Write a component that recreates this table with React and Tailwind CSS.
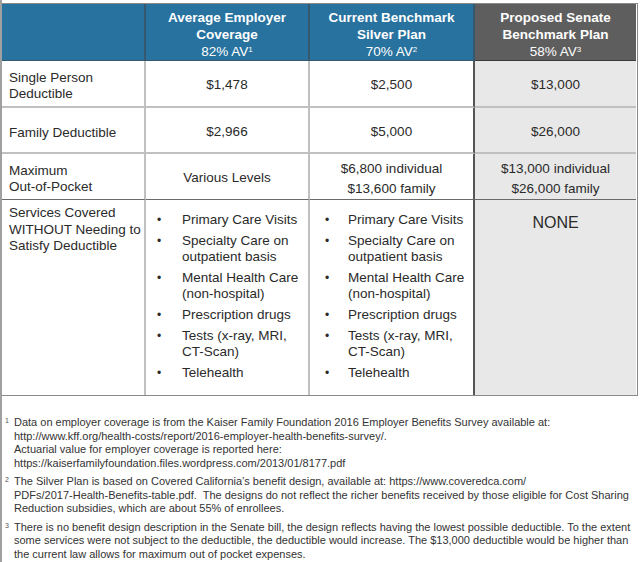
const rows = [
  { label: ['Single Person', 'Deductible'], avg: '$1,478', cur: '$2,500', prop: '$13,000', h: 'h-[47px]' },
  { label: ['Family Deductible'], avg: '$2,966', cur: '$5,000', prop: '$26,000', h: 'h-[46px]' },
]

const services = [
  ['Primary Care Visits'],
  ['Specialty Care on', 'outpatient basis'],
  ['Mental Health Care', '(non-hospital)'],
  ['Prescription drugs'],
  ['Tests (x-ray, MRI,', 'CT-Scan)'],
  ['Telehealth'],
]

const ServiceList = ({ indent }) => (
  <ul className="pt-[12px] flex flex-col gap-[5px]">
    {services.map((lines, i) => (
      <li key={i} className="flex leading-[16px]">
        <span className={`${indent} shrink-0 text-[12px] leading-[16px]`}>•</span>
        <span className="whitespace-nowrap">
          {lines.map((l, j) => (
            <span key={j} className="block">{l}</span>
          ))}
        </span>
      </li>
    ))}
  </ul>
)

const Footnote = ({ n, children }) => (
  <div className="flex">
    <span className="w-[12px] shrink-0 pl-[3px] text-[7px] leading-[10px] text-[#555]">{n}</span>
    <p className="leading-[13.5px]">{children}</p>
  </div>
)

export default function App() {
  return (
    <div className="w-[640px] h-[562px] overflow-hidden bg-white border-l-2 border-[#a0a0a0] font-['Liberation_Sans',Arial,sans-serif] text-[#2a2a2a]">
      <div className="mt-[3px] w-[636px] grid grid-cols-[144px_164px_165px_161px] border-t border-r border-b border-[#8a8a8a] text-[13.5px]">
        {/* header */}
        <div className="h-[57px] bg-[#27729e] border-r-2 border-b border-[#35586c]" />
        <div className="h-[57px] bg-[#27729e] border-r-2 border-b border-[#35586c] pt-[4px] flex flex-col items-center justify-center text-white leading-[17px]">
          <span className="font-bold">Average Employer</span>
          <span className="font-bold">Coverage</span>
          <span>82% AV<sup className="text-[8px]">1</sup></span>
        </div>
        <div className="h-[57px] bg-[#27729e] border-r-2 border-b border-[#35586c] pt-[4px] flex flex-col items-center justify-center text-white leading-[17px]">
          <span className="font-bold">Current Benchmark</span>
          <span className="font-bold">Silver Plan</span>
          <span>70% AV<sup className="text-[8px]">2</sup></span>
        </div>
        <div className="h-[57px] bg-[#5e5e5e] border-b border-[#3a3a3a] pt-[4px] flex flex-col items-center justify-center text-white leading-[17px]">
          <span className="font-bold">Proposed Senate</span>
          <span className="font-bold">Benchmark Plan</span>
          <span>58% AV<sup className="text-[8px]">3</sup></span>
        </div>

        {rows.map((r, i) => (
          <div key={i} className="contents">
            <div className={`${r.h} border-r-2 border-b-2 border-[#c0c0c0] flex flex-col justify-center pl-[7px] pt-[5px] leading-[16px]`}>
              {r.label.map((l) => <span key={l}>{l}</span>)}
            </div>
            <div className={`${r.h} border-r-2 border-b-2 border-[#c0c0c0] pt-[4px] flex items-center justify-center`}>{r.avg}</div>
            <div className={`${r.h} border-r-2 border-b-2 border-[#c0c0c0] border-r-[#555] pt-[4px] flex items-center justify-center`}>{r.cur}</div>
            <div className={`${r.h} bg-[#e8e8e8] border-b-2 border-[#c0c0c0] pt-[4px] flex items-center justify-center`}>{r.prop}</div>
          </div>
        ))}

        {/* max out of pocket */}
        <div className="h-[46px] border-r-2 border-b border-[#c0c0c0] border-b-[#6a6a6a] pt-[4px] flex flex-col justify-center pl-[7px] leading-[16px]">
          <span>Maximum</span>
          <span>Out-of-Pocket</span>
        </div>
        <div className="h-[46px] border-r-2 border-b border-[#c0c0c0] border-b-[#6a6a6a] pt-[4px] flex items-center justify-center">Various Levels</div>
        <div className="h-[46px] border-r-2 border-b border-[#555] border-b-[#6a6a6a] pt-[4px] flex flex-col items-center justify-center leading-[20px]">
          <span>$6,800 individual</span>
          <span>$13,600 family</span>
        </div>
        <div className="h-[46px] bg-[#e8e8e8] border-b border-[#6a6a6a] pt-[4px] flex flex-col items-center justify-center leading-[20px]">
          <span>$13,000 individual</span>
          <span>$26,000 family</span>
        </div>

        {/* services */}
        <div className="h-[195px] border-r-2 border-[#c0c0c0] pl-[7px] pt-[5px] leading-[16.5px] whitespace-nowrap">
          <div>Services Covered</div>
          <div>WITHOUT Needing to</div>
          <div>Satisfy Deductible</div>
        </div>
        <div className="h-[195px] border-r-2 border-[#c0c0c0]">
          <ServiceList indent="w-[36px] pl-[11px]" />
        </div>
        <div className="h-[195px] border-r-2 border-[#555]">
          <ServiceList indent="w-[38px] pl-[15px]" />
        </div>
        <div className="h-[195px] bg-[#e8e8e8] flex justify-center pt-[11px] text-[16px]">NONE</div>
      </div>

      <div className="mt-[20px] pr-[4px] flex flex-col gap-[5px] text-[11px] text-[#333]">
        <Footnote n="1">
          Data on employer coverage is from the Kaiser Family Foundation 2016 Employer Benefits Survey available at:<br />
          http://www.kff.org/health-costs/report/2016-employer-health-benefits-survey/.<br />
          Actuarial value for employer coverage is reported here:<br />
          https://kaiserfamilyfoundation.files.wordpress.com/2013/01/8177.pdf
        </Footnote>
        <Footnote n="2">
          The Silver Plan is based on Covered California’s benefit design, available at: https://www.coveredca.com/<br />
          PDFs/2017-Health-Benefits-table.pdf.&nbsp; The designs do not reflect the richer benefits received by those eligible for Cost Sharing Reduction subsidies, which are about 55% of enrollees.
        </Footnote>
        <Footnote n="3">
          There is no benefit design description in the Senate bill, the design reflects having the lowest possible deductible. To the extent some services were not subject to the deductible, the deductible would increase. The $13,000 deductible would be higher than the current law allows for maximum out of pocket expenses.
        </Footnote>
      </div>
    </div>
  )
}
